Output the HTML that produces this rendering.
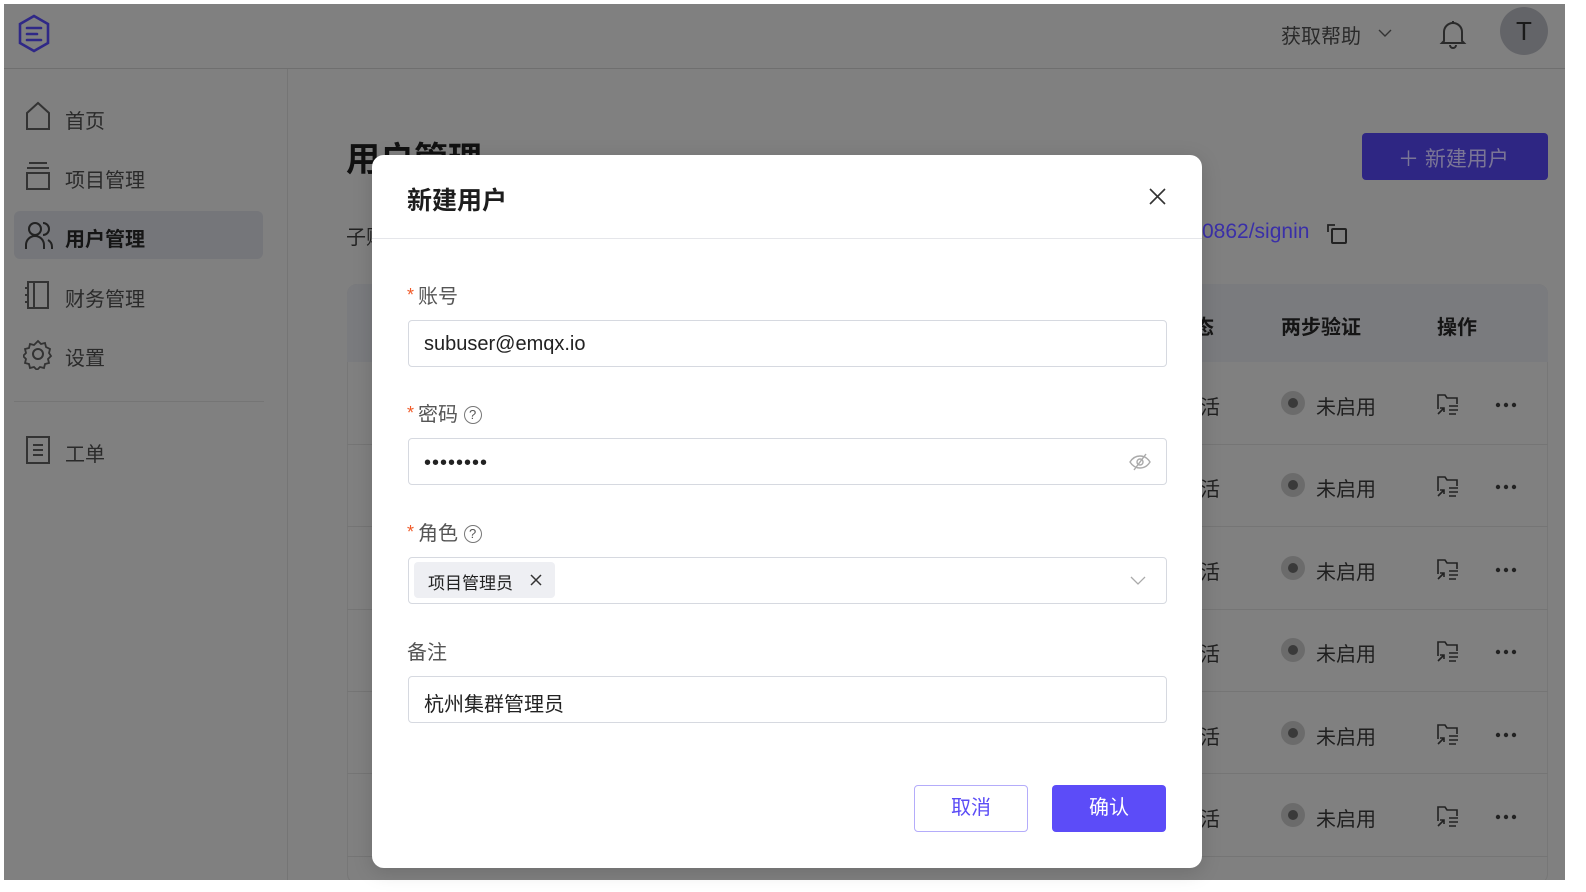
<!DOCTYPE html>
<html><head><meta charset="utf-8"><style>
*{margin:0;padding:0;box-sizing:border-box}
body{width:1586px;height:892px;background:#fff;font-family:"Liberation Sans","Noto Sans CJK SC",sans-serif;position:relative;overflow:hidden;color:#1a1a1a}
.a{position:absolute}
#app{left:4px;top:4px;width:1561px;height:876px;background:#808080;overflow:hidden}
.t{position:absolute;white-space:nowrap}
.nav{font-size:20px;color:#2a2a2a}
.lbl{font-size:20px;color:#555}
.star{color:#f05a28;font-size:18px;vertical-align:2px;margin-right:4px}
.inp{position:absolute;left:408px;width:759px;height:47px;border:1.5px solid #d6d9e0;border-radius:4px;background:#fff}
.row{position:absolute;left:343px;width:1201px;height:1px;background:#757575}
.rt{font-size:20px;color:#1f1f1f}
</style></head><body>
<div id="app" class="a">
 <div class="a" style="left:0;top:64px;width:1561px;height:1px;background:#6f6f6f"></div>
 <svg class="a" style="left:12px;top:9px" width="36" height="42" viewBox="0 0 36 42"><path d="M18 3 L32 11 L32 30 L18 38 L4 30 L4 11 Z" fill="none" stroke="#2f2887" stroke-width="2.6"/><path d="M11 15h14M11 21h10M11 27h14" stroke="#2f2887" stroke-width="2.6" stroke-linecap="round"/></svg>
 <div class="t" style="left:1277px;top:16px;font-size:20px;color:#2a2a2a">获取帮助</div>
 <svg class="a" style="left:1374px;top:24px" width="14" height="10"><path d="M1 2l6 6 6-6" fill="none" stroke="#333" stroke-width="1.4"/></svg>
 <svg class="a" style="left:1434px;top:14px" width="30" height="32" viewBox="0 0 30 32"><path d="M6 23 V14 a9 9 0 0 1 18 0 V23 L26 25 H4 Z" fill="none" stroke="#2a2a2a" stroke-width="2"/><path d="M12 27a3 3 0 0 0 6 0" fill="none" stroke="#2a2a2a" stroke-width="2"/><path d="M15 3v2" stroke="#2a2a2a" stroke-width="2"/></svg>
 <div class="a" style="left:1496px;top:3px;width:48px;height:48px;border-radius:50%;background:#636468;color:#1a1a1a;font-size:26px;text-align:center;line-height:48px">T</div>
 <div class="a" style="left:283px;top:65px;width:1px;height:811px;background:#757575"></div>
 <div class="a" style="left:10px;top:207px;width:249px;height:48px;background:#75767a;border-radius:6px"></div>
 <svg class="a" style="left:20px;top:97px" width="28" height="30"><path d="M3 12 L14 2 L25 12 V28 H3 Z" fill="none" stroke="#333" stroke-width="2"/></svg>
 <div class="t nav" style="left:61px;top:101px">首页</div>
 <svg class="a" style="left:20px;top:156px" width="28" height="32"><path d="M5 3h18M3 8h22" stroke="#333" stroke-width="2"/><rect x="3" y="13" width="22" height="16" fill="none" stroke="#333" stroke-width="2"/></svg>
 <div class="t nav" style="left:61px;top:160px">项目管理</div>
 <svg class="a" style="left:20px;top:216px" width="30" height="32"><circle cx="11" cy="9" r="6" fill="none" stroke="#222" stroke-width="2"/><path d="M2 29v-4a9 9 0 0 1 18 0v4" fill="none" stroke="#222" stroke-width="2"/><path d="M19 3a6 6 0 0 1 0 12M24 20a8 8 0 0 1 4 7v2" fill="none" stroke="#222" stroke-width="2"/></svg>
 <div class="t nav" style="left:61px;top:219px;font-weight:bold;color:#151515">用户管理</div>
 <svg class="a" style="left:20px;top:275px" width="28" height="32"><rect x="4" y="3" width="20" height="26" fill="none" stroke="#333" stroke-width="2"/><path d="M10 3v26M1 9h4M1 16h4M1 23h4" stroke="#333" stroke-width="2"/></svg>
 <div class="t nav" style="left:61px;top:279px">财务管理</div>
 <svg class="a" style="left:19px;top:334px" width="30" height="32" viewBox="0 0 30 32"><circle cx="15" cy="16" r="5" fill="none" stroke="#333" stroke-width="2"/><path d="M15 3l3 3 4-1 1 4 4 2-1 4 2 3-3 3 1 4-4 1-1 4-4-1-3 3-3-3-4 1-1-4-4-1 1-4-3-3 3-3-1-4 4-1 1-4 4 1z" fill="none" stroke="#333" stroke-width="1.8"/></svg>
 <div class="t nav" style="left:61px;top:338px">设置</div>
 <div class="a" style="left:10px;top:397px;width:250px;height:1px;background:#757575"></div>
 <svg class="a" style="left:20px;top:430px" width="28" height="32"><rect x="3" y="3" width="22" height="26" fill="none" stroke="#333" stroke-width="2"/><path d="M9 11h10M9 16h10M9 21h10" stroke="#333" stroke-width="2"/></svg>
 <div class="t nav" style="left:61px;top:434px">工单</div>
 <div class="t" style="left:342px;top:128px;font-size:34px;font-weight:bold;color:#111">用户管理</div>
 <div class="t" style="left:342px;top:217px;font-size:20px;color:#222">子账号登录地址</div>
 <div class="t" style="left:1198px;top:216px;font-size:21px;color:#3a2fa8">0862/signin</div>
 <svg class="a" style="left:1322px;top:218px" width="24" height="24"><path d="M2 10V3h7" fill="none" stroke="#222" stroke-width="1.8"/><rect x="6" y="7" width="14" height="14" rx="1" fill="none" stroke="#222" stroke-width="2"/></svg>
 <div class="a" style="left:1358px;top:129px;width:186px;height:47px;background:#2e2683;border-radius:4px"></div>
 <div class="t" style="left:1394px;top:139px;font-size:21px;color:#7b7696">＋ 新建用户</div>
 <div class="a" style="left:343px;top:280px;width:1201px;height:600px;border-radius:10px;background:#808080;border:1px solid #777"></div>
 <div class="a" style="left:343px;top:280px;width:1201px;height:78px;border-radius:10px 10px 0 0;background:#7a7b7e"></div>
 <div class="t" style="left:1277px;top:307px;font-size:20px;font-weight:bold;color:#151515">两步验证</div>
 <div class="t" style="left:1433px;top:307px;font-size:20px;font-weight:bold;color:#151515">操作</div>
 <div class="t" style="left:1190px;top:307px;font-size:20px;font-weight:bold;color:#151515">态</div>
 <div class="row" style="top:440px"></div><div class="row" style="top:522px"></div><div class="row" style="top:605px"></div><div class="row" style="top:687px"></div><div class="row" style="top:769px"></div><div class="row" style="top:852px"></div>
</div>
<div class="a" style="left:4px;top:4px;width:1561px;height:876px;pointer-events:none">
 <div class="t rt" style="left:1196px;top:387px">活</div><div class="a" style="left:1277px;top:387px;width:24px;height:24px;border-radius:50%;background:#6b6b6b"></div><div class="a" style="left:1284px;top:394px;width:10px;height:10px;border-radius:50%;background:#3a3a3a"></div><div class="t rt" style="left:1312px;top:387px">未启用</div>
 <div class="t rt" style="left:1196px;top:469px">活</div><div class="a" style="left:1277px;top:469px;width:24px;height:24px;border-radius:50%;background:#6b6b6b"></div><div class="a" style="left:1284px;top:476px;width:10px;height:10px;border-radius:50%;background:#3a3a3a"></div><div class="t rt" style="left:1312px;top:469px">未启用</div>
 <div class="t rt" style="left:1196px;top:552px">活</div><div class="a" style="left:1277px;top:552px;width:24px;height:24px;border-radius:50%;background:#6b6b6b"></div><div class="a" style="left:1284px;top:559px;width:10px;height:10px;border-radius:50%;background:#3a3a3a"></div><div class="t rt" style="left:1312px;top:552px">未启用</div>
 <div class="t rt" style="left:1196px;top:634px">活</div><div class="a" style="left:1277px;top:634px;width:24px;height:24px;border-radius:50%;background:#6b6b6b"></div><div class="a" style="left:1284px;top:641px;width:10px;height:10px;border-radius:50%;background:#3a3a3a"></div><div class="t rt" style="left:1312px;top:634px">未启用</div>
 <div class="t rt" style="left:1196px;top:717px">活</div><div class="a" style="left:1277px;top:717px;width:24px;height:24px;border-radius:50%;background:#6b6b6b"></div><div class="a" style="left:1284px;top:724px;width:10px;height:10px;border-radius:50%;background:#3a3a3a"></div><div class="t rt" style="left:1312px;top:717px">未启用</div>
 <div class="t rt" style="left:1196px;top:799px">活</div><div class="a" style="left:1277px;top:799px;width:24px;height:24px;border-radius:50%;background:#6b6b6b"></div><div class="a" style="left:1284px;top:806px;width:10px;height:10px;border-radius:50%;background:#3a3a3a"></div><div class="t rt" style="left:1312px;top:799px">未启用</div>
 <svg class="a" style="left:1431px;top:388px" width="90" height="24"><path d="M3 17V3h7l2 3h10v6" fill="none" stroke="#222" stroke-width="1.6"/><path d="M3 22l6-6M5 16h4v4M14 14h9M14 18h9M14 22h7" fill="none" stroke="#222" stroke-width="1.6"/><circle cx="63" cy="13" r="2.2" fill="#222"/><circle cx="71" cy="13" r="2.2" fill="#222"/><circle cx="79" cy="13" r="2.2" fill="#222"/></svg>
 <svg class="a" style="left:1431px;top:470px" width="90" height="24"><path d="M3 17V3h7l2 3h10v6" fill="none" stroke="#222" stroke-width="1.6"/><path d="M3 22l6-6M5 16h4v4M14 14h9M14 18h9M14 22h7" fill="none" stroke="#222" stroke-width="1.6"/><circle cx="63" cy="13" r="2.2" fill="#222"/><circle cx="71" cy="13" r="2.2" fill="#222"/><circle cx="79" cy="13" r="2.2" fill="#222"/></svg>
 <svg class="a" style="left:1431px;top:553px" width="90" height="24"><path d="M3 17V3h7l2 3h10v6" fill="none" stroke="#222" stroke-width="1.6"/><path d="M3 22l6-6M5 16h4v4M14 14h9M14 18h9M14 22h7" fill="none" stroke="#222" stroke-width="1.6"/><circle cx="63" cy="13" r="2.2" fill="#222"/><circle cx="71" cy="13" r="2.2" fill="#222"/><circle cx="79" cy="13" r="2.2" fill="#222"/></svg>
 <svg class="a" style="left:1431px;top:635px" width="90" height="24"><path d="M3 17V3h7l2 3h10v6" fill="none" stroke="#222" stroke-width="1.6"/><path d="M3 22l6-6M5 16h4v4M14 14h9M14 18h9M14 22h7" fill="none" stroke="#222" stroke-width="1.6"/><circle cx="63" cy="13" r="2.2" fill="#222"/><circle cx="71" cy="13" r="2.2" fill="#222"/><circle cx="79" cy="13" r="2.2" fill="#222"/></svg>
 <svg class="a" style="left:1431px;top:718px" width="90" height="24"><path d="M3 17V3h7l2 3h10v6" fill="none" stroke="#222" stroke-width="1.6"/><path d="M3 22l6-6M5 16h4v4M14 14h9M14 18h9M14 22h7" fill="none" stroke="#222" stroke-width="1.6"/><circle cx="63" cy="13" r="2.2" fill="#222"/><circle cx="71" cy="13" r="2.2" fill="#222"/><circle cx="79" cy="13" r="2.2" fill="#222"/></svg>
 <svg class="a" style="left:1431px;top:800px" width="90" height="24"><path d="M3 17V3h7l2 3h10v6" fill="none" stroke="#222" stroke-width="1.6"/><path d="M3 22l6-6M5 16h4v4M14 14h9M14 18h9M14 22h7" fill="none" stroke="#222" stroke-width="1.6"/><circle cx="63" cy="13" r="2.2" fill="#222"/><circle cx="71" cy="13" r="2.2" fill="#222"/><circle cx="79" cy="13" r="2.2" fill="#222"/></svg>
</div>
<div class="a" style="left:372px;top:155px;width:830px;height:713px;background:#fff;border-radius:12px;box-shadow:0 4px 20px rgba(0,0,0,.15)"></div>
<div class="t" style="left:407px;top:181px;font-size:25px;font-weight:bold;color:#1d1d1d">新建用户</div>
<svg class="a" style="left:1148px;top:187px" width="20" height="20"><path d="M2 2l15 15M17 2L2 17" stroke="#333" stroke-width="1.6"/></svg>
<div class="a" style="left:372px;top:238px;width:830px;height:1px;background:#e5e6ea"></div>
<div class="t lbl" style="left:407px;top:280px"><span class="star">*</span>账号</div>
<div class="inp" style="top:320px"></div>
<div class="t" style="left:424px;top:333px;font-size:20px;color:#222">subuser@emqx.io</div>
<div class="t lbl" style="left:407px;top:398px"><span class="star">*</span>密码 <span style="display:inline-block;width:18px;height:18px;border:1.3px solid #777;border-radius:50%;font-size:13px;text-align:center;line-height:16px;vertical-align:2px">?</span></div>
<div class="inp" style="top:438px"></div>
<div class="t" style="left:424px;top:452px;font-size:20px;letter-spacing:1px;color:#222">••••••••</div>
<svg class="a" style="left:1129px;top:452px" width="22" height="20"><path d="M1 10c5-8 15-8 20 0c-5 8-15 8-20 0z" fill="none" stroke="#aaa" stroke-width="1.4"/><circle cx="11" cy="10" r="3" fill="none" stroke="#aaa" stroke-width="1.4"/><path d="M17 2L5 18" stroke="#aaa" stroke-width="1.4"/></svg>
<div class="t lbl" style="left:407px;top:517px"><span class="star">*</span>角色 <span style="display:inline-block;width:18px;height:18px;border:1.3px solid #777;border-radius:50%;font-size:13px;text-align:center;line-height:16px;vertical-align:2px">?</span></div>
<div class="inp" style="top:557px"></div>
<div class="a" style="left:414px;top:562px;width:141px;height:36px;background:#eeeff3;border-radius:4px"></div>
<div class="t" style="left:428px;top:569px;font-size:17px;color:#222">项目管理员</div>
<svg class="a" style="left:530px;top:574px" width="12" height="12"><path d="M1 1l10 10M11 1L1 11" stroke="#333" stroke-width="1.5"/></svg>
<svg class="a" style="left:1130px;top:576px" width="16" height="10"><path d="M1 1l7 7 7-7" fill="none" stroke="#aaa" stroke-width="1.3"/></svg>
<div class="t lbl" style="left:407px;top:636px">备注</div>
<div class="inp" style="top:676px"></div>
<div class="t" style="left:424px;top:688px;font-size:20px;color:#222">杭州集群管理员</div>
<div class="a" style="left:914px;top:785px;width:114px;height:47px;border:1.5px solid #b4acfa;border-radius:4px;background:#fff;color:#5b4cf6;font-size:20px;text-align:center;line-height:44px">取消</div>
<div class="a" style="left:1052px;top:785px;width:114px;height:47px;border-radius:4px;background:#5c4cf8;color:#fff;font-size:20px;text-align:center;line-height:47px">确认</div>
</body></html>
